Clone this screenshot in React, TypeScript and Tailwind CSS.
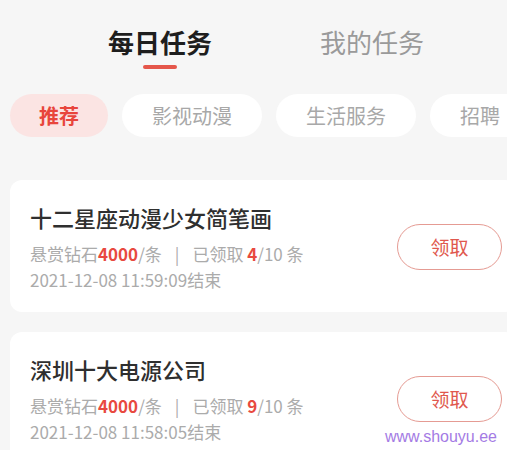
import React from "react";

const chips = ["推荐", "影视动漫", "生活服务", "招聘"];

const tasks = [
  { title: "十二星座动漫少女简笔画", reward: "4000", got: "4", total: "10", end: "2021-12-08 11:59:09结束" },
  { title: "深圳十大电源公司", reward: "4000", got: "9", total: "10", end: "2021-12-08 11:58:05结束" },
];

function TaskCard({ task }: { task: (typeof tasks)[number] }) {
  return (
    <div className="ml-[10px] w-[507px] rounded-[12px] bg-white pl-[20px] pr-[15px] pt-[22px] pb-[20px] flex items-center justify-between">
      <div className="flex flex-col">
        <div className="text-[22px] leading-[30px] font-medium text-[#2f2f2f]">{task.title}</div>
        <div className="mt-[10px] text-[17px] leading-[24px] text-[#ababab]">
          悬赏钻石<span className="text-[#e8493f] font-bold">{task.reward}</span>/条
          <span className="mx-[13px]">|</span>
          已领取 <span className="text-[#e8493f] font-bold">{task.got}</span>/{task.total} 条
        </div>
        <div className="mt-[2px] text-[17px] leading-[24px] text-[#ababab]">{task.end}</div>
      </div>
      <button className="w-[105px] h-[46px] rounded-full border-[1.5px] border-[#e59b93] text-[19px] text-[#e0584e]">
        领取
      </button>
    </div>
  );
}

export default function App() {
  return (
    <div
      className="relative w-[507px] h-[450px] overflow-hidden bg-[#f6f6f6]"
      style={{ fontFamily: '"Noto Sans CJK SC", "Noto Sans", sans-serif' }}
    >
      <div className="w-[527px]">
        {/* top tabs */}
        <div className="flex pl-[108px] gap-[108px] pt-[24px]">
          <div className="flex flex-col items-center">
            <span className="text-[26px] leading-[36px] font-bold text-[#1e1e1e]">每日任务</span>
            <span className="mt-[5px] h-[4px] w-[34px] rounded-full bg-[#e5574b]" />
          </div>
          <span className="text-[26px] leading-[36px] text-[#9a9a9a]">我的任务</span>
        </div>

        {/* category chips */}
        <div className="mt-[25px] flex gap-[14px] pl-[10px] whitespace-nowrap">
          {chips.map((c, i) => (
            <span
              key={c}
              className={
                i === 0
                  ? "h-[43px] px-[29px] rounded-full bg-[#fbe4e3] text-[#e8453c] font-bold text-[20px] flex items-center"
                  : "h-[43px] px-[30px] rounded-full bg-white text-[#a8a8a8] text-[20px] flex items-center"
              }
            >
              {c}
            </span>
          ))}
        </div>

        {/* task list */}
        <div className="mt-[43px] flex flex-col gap-[20px]">
          {tasks.map((t) => (
            <TaskCard key={t.title} task={t} />
          ))}
        </div>
      </div>

      <span
        className="absolute right-[10px] top-[427px] text-[16px] leading-[20px] text-[#a47be4]"
        style={{ fontFamily: '"Liberation Sans", sans-serif' }}
      >
        www.shouyu.ee
      </span>
    </div>
  );
}
